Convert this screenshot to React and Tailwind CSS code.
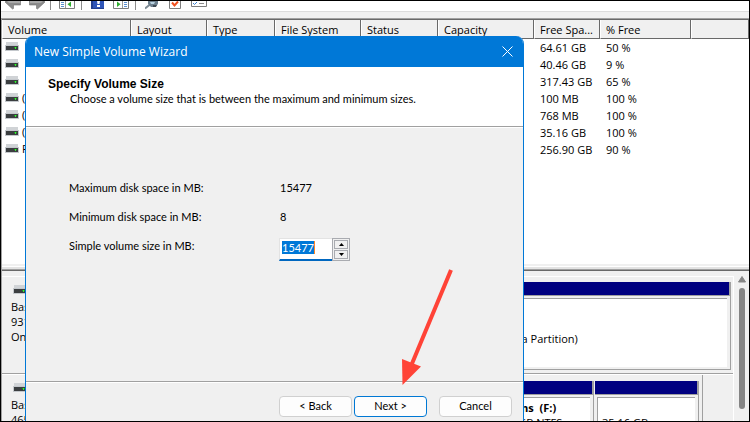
import React, { useState } from "react";

const columns = [
  "Volume",
  "Layout",
  "Type",
  "File System",
  "Status",
  "Capacity",
  "Free Spa...",
  "% Free",
  "",
];

const volumes = [
  { id: 1, name: "", free: "64.61 GB", percent: "50 %" },
  { id: 2, name: "", free: "40.46 GB", percent: "9 %" },
  { id: 3, name: "", free: "317.43 GB", percent: "65 %" },
  { id: 4, name: "(D", free: "100 MB", percent: "100 %" },
  { id: 5, name: "(D", free: "768 MB", percent: "100 %" },
  { id: 6, name: "(D", free: "35.16 GB", percent: "100 %" },
  { id: 7, name: "P", free: "256.90 GB", percent: "90 %" },
];

const DriveIcon = () => (
  <svg width="14" height="10" viewBox="0 0 14 10" className="shrink-0">
    <path d="M1 0h12v4H1z" fill="#d0d3d6" />
    <rect y="3" width="14" height="6" fill="#c4c8cc" />
    <rect x="1" y="4" width="12" height="4" fill="#3b3e40" />
    <rect x="9" y="5" width="3" height="1" fill="#1f9a1f" />
    <rect x="10" y="5" width="1" height="2" fill="#35f035" />
  </svg>
);

const Separator = () => <div className="w-px h-full bg-[#8c8c8c]" />;

const ArrowIcon = ({ flip }) => (
  <svg
    width="16"
    height="9"
    viewBox="0 0 16 9"
    className={flip ? "-scale-x-100" : ""}
  >
    <path
      d="M0 1L1 0H15.5V4H8.500V7.500L7.500 8L0 1Z"
      fill="#8b8b8b"
      stroke="#6f6f6f"
      strokeWidth="0.6"
    />
    <path d="M2 0h13v2H4z" fill="#a9a9a9" />
  </svg>
);

const PanelIcon = ({ flip }) => (
  <svg
    width="16"
    height="9"
    viewBox="0 0 16 9"
    className={flip ? "-scale-x-100" : ""}
  >
    <path d="M.5 0V7.500H15.500V0" fill="#fff" stroke="#7d7d7d" />
    <path d="M6.500 0V7" stroke="#9a9a9a" />
    <path d="M2 1.500h3M2 3.500h3M2 5.500h3" stroke="#5b8fd0" />
    <path d="M12 0.500V6L8.500 3.200Z" fill="#2fae2f" />
  </svg>
);

const Toolbar = () => (
  <div className="h-[10px] bg-white flex items-start overflow-hidden pl-1">
    <div className="flex h-[9px] gap-2">
      <ArrowIcon />
      <ArrowIcon flip />
    </div>
    <div className="flex h-[9px] gap-2 pl-[5px]">
      <Separator />
      <PanelIcon />
    </div>
    <div className="flex h-[9px] gap-[9px] pl-1.5">
      <Separator />
      <svg width="13" height="9" viewBox="0 0 13 9">
        <rect width="13" height="8" fill="#2f55b8" />
        <path d="M0 0h2v8H0zM0 7h13v1H0z" fill="#233f8e" />
        <path d="M6 0h3L8.500 3h-2z" fill="#fff" />
        <rect x="6" y="4" width="3" height="2" fill="#fff" />
      </svg>
      <PanelIcon flip />
    </div>
    <div className="flex h-[9px] gap-[9px] pl-1.5">
      <Separator />
      <svg width="15" height="9" viewBox="0 0 15 9">
        <path d="M0 7.500L5 3.500" stroke="#7d8a94" strokeWidth="2" />
        <path d="M3 0h10v3l-3 3H6L3 3z" fill="#6d7f8d" />
        <path d="M5 1h5l-1 2H6z" fill="#b9d3e2" />
        <path d="M8 4h4l-1 2h-3z" fill="#3e4a54" />
      </svg>
      <svg width="13" height="9" viewBox="0 0 13 9">
        <path d="M.5 0V7.500H11.500V0" fill="#fff" stroke="#7d7d7d" />
        <path d="M3 1.500L5.500 4.500L9 0.500" fill="none" stroke="#f0501e" strokeWidth="2" />
      </svg>
      <svg width="16" height="9" viewBox="0 0 16 9">
        <path d="M.5 0V5.500H15.500V0" fill="#fff" stroke="#7d7d7d" />
        <path d="M2 2l1.500 1.500L6 1" fill="none" stroke="#3b7fd0" />
        <path d="M8 2.500h5" stroke="#8c8c8c" />
      </svg>
    </div>
  </div>
);

const VolumeList = () => (
  <div className="h-[245px] bg-white border-t border-[#696969] overflow-hidden">
    <table className="table-fixed w-full border-separate border-spacing-0">
      <colgroup>
        <col className="w-[129px]" />
        <col className="w-[76px]" />
        <col className="w-[68px]" />
        <col className="w-[86px]" />
        <col className="w-[77px]" />
        <col className="w-[96px]" />
        <col className="w-[66px]" />
        <col className="w-[91px]" />
        <col />
      </colgroup>
      <thead>
        <tr>
          {columns.map((title, index) => (
            <th
              key={index}
              className="h-[19px] p-0 pt-[2px] pl-[5px] bg-[#f0f0f0] border-l border-l-white border-r border-r-[#696969] border-b border-b-[#696969] text-left font-normal leading-4 whitespace-nowrap"
            >
              {title}
            </th>
          ))}
        </tr>
      </thead>
      <tbody>
        {volumes.map((item) => (
          <tr key={item.id} className="h-[17px]">
            <td className="p-0 pl-[3px] leading-4 align-top">
              <div className="h-4 flex items-center gap-[3px]">
                <DriveIcon />
                {item.name}
              </div>
            </td>
            <td colSpan={5} className="p-0"></td>
            <td className="p-0 pl-[6px] leading-4 whitespace-nowrap">{item.free}</td>
            <td className="p-0 pl-[6px] leading-4 whitespace-nowrap">{item.percent}</td>
            <td className="p-0"></td>
          </tr>
        ))}
      </tbody>
    </table>
  </div>
);

const Partition = ({ className, children }) => (
  <div className={`flex flex-col ${className}`}>
    <div className="h-[13px] bg-[#000080] border-r-2 border-[#a0a0a0]"></div>
    <div className="flex-1 p-[2px] pr-[3px] border-t border-r border-b border-[#a0a0a0]">
      <div className="h-full bg-white border-t border-l border-[#a0a0a0] pl-1 leading-[15px] whitespace-nowrap overflow-hidden">
        {children}
      </div>
    </div>
  </div>
);

const DiskLabel = ({ lines }) => (
  <div className="w-[120px] shrink-0 pl-[9px] pt-2">
    <div className="pl-[2px] h-[14px]">
      <DriveIcon />
    </div>
    {lines.map((line, index) => (
      <div key={index} className="leading-[15px]">
        {line}
      </div>
    ))}
  </div>
);

const DiskPane = () => (
  <div className="flex-1 min-h-0 flex bg-[#f0f0f0] pt-[5px]">
    <div className="flex-1 min-w-0 border-r border-white">
      <div className="h-[98px] flex border-t border-white border-b border-b-[#a0a0a0]">
        <DiskLabel lines={["Basic", "931.50 GB", "Online"]} />
        <div className="flex-1 flex pt-[5px] pb-[3px] pr-[2px]">
          <Partition className="flex-1">
            <div className="pt-[32px] pl-[342px]">(Basic Data Partition)</div>
          </Partition>
        </div>
      </div>
      <div className="h-[98px] flex border-t border-white">
        <DiskLabel lines={["Basic", "465.76 GB"]} />
        <div className="flex-1 flex pt-[6px] gap-px mr-[30px] pr-[3px] border-r border-[#a0a0a0]">
          <Partition className="flex-1">
            <div className="pt-[2px] pl-[352px] font-bold whitespace-pre">Programs  (F:)</div>
            <div className="pl-[352px]">290.04 GB NTFS</div>
          </Partition>
          <Partition className="w-[104px]">
            <div className="pt-[17px]">35.16 GB</div>
          </Partition>
        </div>
      </div>
    </div>
    <div className="w-[15px] flex flex-col items-center">
      <svg width="8" height="7" viewBox="0 0 8 7">
        <path d="M4 0.500L7.500 6H0.500Z" fill="#858585" stroke="#858585" strokeLinejoin="round" />
      </svg>
      <div className="mt-[5px] w-[6px] h-[121px] rounded-full bg-[#858585]"></div>
    </div>
  </div>
);

const WizardDialog = () => {
  const [size, setSize] = useState(15477);

  return (
    <div
      role="dialog"
      aria-labelledby="wizard-title"
      className="absolute top-[35px] left-6 bottom-0 w-[499px] flex flex-col rounded-t-lg overflow-hidden border-x border-[#0078d7] bg-[#f0f0f0] font-['Lato',Arial,sans-serif] text-[11px]"
    >
      <div className="h-[31px] bg-[#0078d7] text-white flex items-center justify-between pl-2 pr-[10px]">
        <h1
          id="wizard-title"
          className="font-['Open_Sans',sans-serif] text-[12px] leading-4"
        >
          New Simple Volume Wizard
        </h1>
        <button type="button" aria-label="Close">
          <svg width="11" height="11" viewBox="0 0 11 11" className="block">
            <path d="M.5.5l10 10M10.500.5l-10 10" stroke="#fff" />
          </svg>
        </button>
      </div>

      <div className="h-[60px] bg-white border-b border-[#a0a0a0] pt-[10px] pl-[22px]">
        <h2 className="font-['Liberation_Sans',Arial,sans-serif] font-bold text-[12px] leading-[15px]">
          Specify Volume Size
        </h2>
        <p className="pl-[22px] leading-[13px]">
          Choose a volume size that is between the maximum and minimum sizes.
        </p>
      </div>

      <div className="flex-1 border-t border-white border-b border-b-[#a0a0a0] pt-[52px] pl-[43px] leading-[15px]">
        <dl className="grid grid-cols-[210px_1fr] auto-rows-[23px] gap-y-[6px]">
          <dt>Maximum disk space in MB:</dt>
          <dd className="pl-px">15477</dd>
          <dt>Minimum disk space in MB:</dt>
          <dd className="pl-px">8</dd>
          <dt>
            <label htmlFor="size">Simple volume size in MB:</label>
          </dt>
          <dd className="flex">
            <div className="w-[53px] bg-white border-t border-l border-[#e3e3e3] border-b-2 border-b-[#0067c0] pl-[2px] pt-[2px]">
              <input
                id="size"
                type="text"
                value={size}
                onChange={(e) => setSize(Number(e.target.value) || 0)}
                className="block w-[33px] h-[13px] bg-[#0078d7] text-white border-r border-[#ff8728] outline-none"
              />
            </div>
            <div className="w-[18px] border border-[#a9abb0] flex flex-col gap-px p-px">
              <button
                type="button"
                aria-label="Increase"
                onClick={() => setSize(size + 1)}
                className="flex-1 flex items-center justify-center border border-[#a9abb0] bg-[#f0f0f0]"
              >
                <svg width="5" height="3" viewBox="0 0 5 3">
                  <path d="M0 3L2.500 0L5 3Z" />
                </svg>
              </button>
              <button
                type="button"
                aria-label="Decrease"
                onClick={() => setSize(size - 1)}
                className="flex-1 flex items-center justify-center border border-[#a9abb0] bg-[#f0f0f0]"
              >
                <svg width="5" height="3" viewBox="0 0 5 3">
                  <path d="M0 0L2.500 3L5 0Z" />
                </svg>
              </button>
            </div>
          </dd>
        </dl>
      </div>

      <div className="h-[39px] border-t border-white flex justify-end items-start pt-[13px] pr-[11px]">
        <button
          type="button"
          className="w-[73px] h-[21px] mr-[2px] rounded bg-[#fdfdfd] border border-[#d0d0d0]"
        >
          &lt; Back
        </button>
        <button
          type="button"
          className="w-[73px] h-[21px] mr-3 rounded bg-[#fdfdfd] border border-[#0078d4]"
        >
          Next &gt;
        </button>
        <button
          type="button"
          className="w-[73px] h-[21px] rounded bg-[#fdfdfd] border border-[#d0d0d0]"
        >
          Cancel
        </button>
      </div>
    </div>
  );
};

const App = () => {
  return (
    <div className="relative h-screen w-full flex flex-col overflow-hidden border border-black bg-[#f0f0f0] text-black font-['Open_Sans',sans-serif] text-[11px]">
      <Toolbar />
      <div className="h-[7px] border-t border-[#dcdcdc]"></div>
      <div className="flex-1 min-h-0 flex flex-col border-t border-l border-[#a0a0a0]">
        <VolumeList />
        <div className="h-[7px] flex flex-col justify-end border-b border-[#696969]">
          <div className="h-1 bg-[#e3e3e3] border-t border-white border-b border-b-[#a0a0a0]"></div>
        </div>
        <DiskPane />
      </div>

      <WizardDialog />

      {/* pointer to the Next button */}
      <svg
        width="60"
        height="120"
        viewBox="0 0 60 120"
        className="absolute left-[399px] top-[267px] pointer-events-none"
      >
        <path d="M51 2L11 98" stroke="#ff4337" strokeWidth="4" />
        <path d="M2.500 117L2 91L21 98.500Z" fill="#ff4337" />
      </svg>
    </div>
  );
};

export default App;
